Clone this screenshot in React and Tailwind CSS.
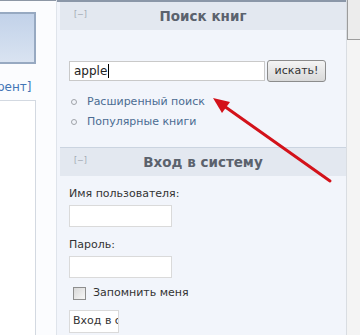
import React from "react";

const FONT = { fontFamily: '"DejaVu Sans", Verdana, sans-serif' };

const BlockHeader = ({ title }) => (
  <div className="relative flex h-[28px] items-center justify-center bg-[#e3e8f0]">
    <span className="absolute left-[14px] top-[9px] text-[8px] leading-none text-[#a2a9b3]">[−]</span>
    <span className="text-[13.5px] font-bold text-[#5b626d]">{title}</span>
  </div>
);

export default function App() {
  return (
    <div
      className="relative flex h-[335px] w-[360px] overflow-hidden bg-[#fbfcfe]"
      style={FONT}
    >
      {/* left column */}
      <div className="flex w-[57px] shrink-0 flex-col border-r border-[#dfe4eb]">
        <div className="h-[1px] bg-[#8d97a5]" />
        <div className="mt-[11px] h-[52px] w-[36px] border-2 border-l-0 border-[#97a9c1] bg-gradient-to-b from-[#c2d2e9] to-[#d9e3f1]" />
        <div className="-ml-[3px] mt-[17px] whitespace-nowrap text-[12px] leading-none text-[#4275b5]">рент]</div>
        <div className="mt-[7px] w-[36px] flex-1 border-r border-t border-[#d3d9e1] bg-white" />
      </div>

      {/* main panel */}
      <div className="w-[289px] shrink-0 border-t-2 border-[#8b97a8] bg-[#f2f5fb] pl-[3px]">
        <BlockHeader title="Поиск книг" />
        <div className="px-[9px] pt-[30px]">
          <div className="flex items-center gap-[2px]">
            <div className="flex h-[20px] w-[196px] items-center border border-[#c9c9c9] bg-white px-[4px] text-[12px] text-[#222]">
              apple<span className="ml-[1px] h-[14px] w-[1px] bg-black" />
            </div>
            <button className="h-[22px] w-[59px] rounded-[3px] border border-[#8c8c8c] bg-gradient-to-b from-[#f4f4f4] to-[#d9d9d9] text-[11px] text-[#333]">
              искать!
            </button>
          </div>
          <ul className="mt-[10px] flex flex-col">
            {["Расширенный поиск", "Популярные книги"].map((t) => (
              <li key={t} className="flex h-[20px] items-center">
                <span className="ml-[2px] mr-[10px] h-[6px] w-[6px] rounded-full border border-[#a0a4aa]" />
                <span className="text-[11px] text-[#4b6c92]">{t}</span>
              </li>
            ))}
          </ul>
        </div>
        <div className="mt-[15px] border-t border-[#cbd4e0]">
          <BlockHeader title="Вход в систему" />
        </div>
        <div className="px-[9px] pt-[11px] text-[11px] text-[#333]">
          <div className="leading-[14px]">Имя пользователя:</div>
          <div className="mt-[4px] h-[22px] w-[103px] border border-[#dadada] bg-white" />
          <div className="mt-[11px] leading-[14px]">Пароль:</div>
          <div className="mt-[4px] h-[22px] w-[103px] border border-[#dadada] bg-white" />
          <div className="mt-[7px] flex items-center">
            <span className="ml-[4px] mr-[7px] h-[13px] w-[13px] border border-[#8e8e8e] bg-gradient-to-br from-[#d8d8d8] to-[#f7f7f7]" />
            <span className="text-[11px]">Запомнить меня</span>
          </div>
          <button className="mt-[8px] h-[23px] w-[50px] overflow-hidden whitespace-nowrap border border-[#dadada] bg-white pl-[3px] text-left text-[11px] text-[#333]">
            Вход в систему
          </button>
        </div>
      </div>

      {/* right edge */}
      <div className="flex flex-1 flex-col border-l border-[#d9dde2] bg-[#f4f4f4]">
        <div className="h-[40px] border-b border-l border-[#9c9c9c] bg-[#ececec]" />
      </div>

      {/* red annotation arrow */}
      <svg className="pointer-events-none absolute inset-0" width="360" height="335">
        <line x1="330" y1="181" x2="224" y2="106" stroke="#d3121a" strokeWidth="3" strokeLinecap="round" />
        <polygon points="213,98 230,102 222,113" fill="#d3121a" />
      </svg>
    </div>
  );
}
